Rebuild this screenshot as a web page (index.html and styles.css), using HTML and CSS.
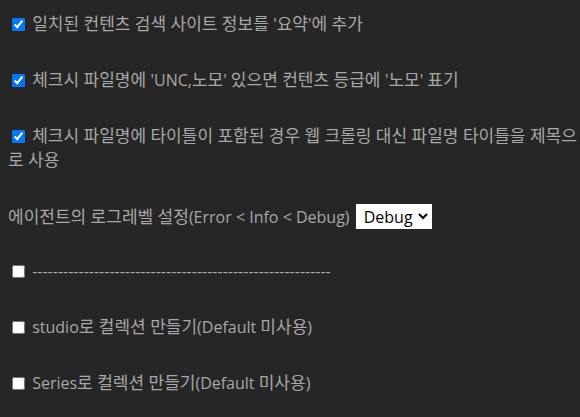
FILE: index.html
```html
<!DOCTYPE html>
<html lang="ko">
<head>
<meta charset="utf-8">
<link rel="stylesheet" href="styles.css">
</head>
<body>
<div class="settings">
  <div class="item"><label><input type="checkbox" checked> <span class="ko">일치된 컨텐츠 검색 사이트 정보를 </span>'<span class="ko">요약</span>'<span class="ko">에 추가</span></label></div>
  <div class="item"><label><input type="checkbox" checked> <span class="ko">체크시 파일명에 </span>'UNC,<span class="ko">노모</span>' <span class="ko">있으면 컨텐츠 등급에 </span>'<span class="ko">노모</span>' <span class="ko">표기</span></label></div>
  <div class="item"><label><input type="checkbox" checked> <span class="ko">체크시 파일명에 타이틀이 포함된 경우 웹 크롤링 대신 파일명 타이틀을 제목으로 사용</span></label></div>
  <div class="item item-select"><span class="ko">에이전트의 로그레벨 설정</span>(Error &lt; Info &lt; Debug) <select class="level"><option>Error</option><option>Info</option><option selected>Debug</option></select></div>
  <div class="item"><label><input type="checkbox"> ----------------------------------------------------------</label></div>
  <div class="item"><label><input type="checkbox"> studio<span class="ko">로 컬렉션 만들기</span>(Default <span class="ko">미사용</span>)</label></div>
  <div class="item"><label><input type="checkbox"> Series<span class="ko">로 컬렉션 만들기</span>(Default <span class="ko">미사용</span>)</label></div>
</div>
</body>
</html>
```
FILE: styles.css
```css
html, body {
  background: #262626;
}
body {
  margin: 8px 0 8px 8px;
  color: #a8a8a8;
  font-family: "Open Sans", "Noto Sans CJK KR", sans-serif;
  font-size: 16px;
  line-height: 24px;
}
.settings {
  display: flex;
  flex-direction: column;
  gap: 32px;
  padding-top: 4px;
}
.item-select {
  margin-bottom: -2px;
}
.ko {
  font-size: 17px;
  line-height: 24px;
}
.item input[type="checkbox"] {
  margin: 0 3px 0 4px;
  vertical-align: -1px;
}
.level {
  font-family: "Open Sans", "Noto Sans CJK KR", sans-serif;
  font-size: 16px;
  color: #000;
  background: #fff;
  border: 1px solid #fff;
  border-radius: 0;
  height: 25px;
  padding: 0 2px 0 3px;
  margin-left: 2px;
}
```
